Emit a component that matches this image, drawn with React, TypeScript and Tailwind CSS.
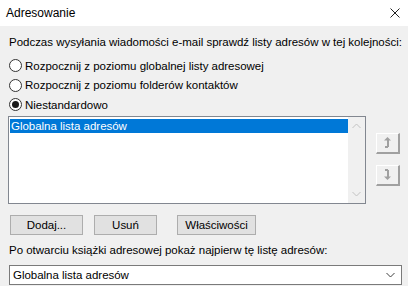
import { useState } from 'react';

function Radio({ checked, label }: { checked?: boolean; label: string }) {
  return (
    <label className="flex items-center h-[19.5px] gap-[3px]">
      <span className="w-[13px] h-[13px] rounded-full border border-[#333333] bg-white flex items-center justify-center">
        {checked && <span className="w-[7px] h-[7px] rounded-full bg-[#1a1a1a]" />}
      </span>
      <span>{label}</span>
    </label>
  );
}

function Chevron({ up, color }: { up?: boolean; color: string }) {
  return (
    <svg width="9" height="6" viewBox="0 0 9 6" className="block">
      <path d={up ? 'M0.5 5 L4.5 1 L8.5 5' : 'M0.5 1 L4.5 5 L8.5 1'} fill="none" stroke={color} strokeWidth="1" />
    </svg>
  );
}

function MoveButton({ up }: { up?: boolean }) {
  return (
    <button className="w-[24px] h-[21px] bg-[#f0f0f0] border-t border-l border-white border-r-2 border-b-2 border-r-[#a0a0a0] border-b-[#a0a0a0] flex items-center justify-center">
      <svg width="7" height="11" viewBox="0 0 7 11" className="block">
        {up ? (
          <g fill="#a0a0a0">
            <path d="M3.5 0 L7 3.5 L0 3.5 Z" />
            <rect x="3" y="3" width="2" height="7" />
            <rect x="1" y="9" width="3" height="2" />
          </g>
        ) : (
          <g fill="#a0a0a0">
            <path d="M3.5 11 L7 7.5 L0 7.5 Z" />
            <rect x="3" y="1" width="2" height="7" />
            <rect x="1" y="0" width="3" height="2" />
          </g>
        )}
      </svg>
    </button>
  );
}

export default function App() {
  const [sel] = useState(0);
  return (
    <div className="w-[408px] h-[286px] bg-[#f0f0f0] text-[11.5px] tracking-[-0.02px] leading-[16px] text-black font-['Liberation_Sans',sans-serif] whitespace-nowrap overflow-hidden">
      <div className="h-[26px] bg-white flex items-center justify-between pl-[6px] pr-[8px]">
        <span className="text-[12px] tracking-normal">Adresowanie</span>
        <svg width="10" height="10" viewBox="0 0 10 10" className="block">
          <path d="M0.5 0.5 L9.5 9.5 M9.5 0.5 L0.5 9.5" stroke="#222" strokeWidth="1" />
        </svg>
      </div>

      <div className="px-[8px]">
        <p className="mt-[8px] pl-[1px]">Podczas wysyłania wiadomości e-mail sprawdź listy adresów w tej kolejności:</p>

        <div className="mt-[6px] pl-[1px]">
          <Radio label="Rozpocznij z poziomu globalnej listy adresowej" />
          <Radio label="Rozpocznij z poziomu folderów kontaktów" />
          <Radio checked label="Niestandardowo" />
        </div>

        <div className="flex mt-[1px]">
          <div className="w-[360px] h-[88px] border border-[#828790] bg-white flex">
            <div className="flex-1 pt-[2px] pl-[1px]">
              <div className={sel === 0 ? 'h-[14px] bg-[#0078d7] text-white pl-[1px] leading-[14px]' : 'h-[14px] pl-[1px]'}>
                Globalna lista adresów
              </div>
            </div>
            <div className="w-[17px] bg-[#f0f0f0] flex flex-col justify-between items-center py-[6px]">
              <Chevron up color="#c2c2c2" />
              <Chevron color="#c2c2c2" />
            </div>
          </div>
          <div className="ml-[10px] flex flex-col pt-[17px] gap-[11px]">
            <MoveButton up />
            <MoveButton />
          </div>
        </div>

        <div className="flex mt-[11px] pl-[2px]">
          <button className="w-[73px] h-[20px] bg-[#e1e1e1] border border-[#adadad]">Dodaj...</button>
          <button className="ml-[11px] w-[63px] h-[20px] bg-[#e1e1e1] border border-[#adadad]">Usuń</button>
          <button className="ml-[20px] w-[79px] h-[20px] bg-[#e1e1e1] border border-[#adadad]">Właściwości</button>
        </div>

        <p className="mt-[7px] pl-[1px]">Po otwarciu książki adresowej pokaż najpierw tę listę adresów:</p>

        <div className="mt-[7px] ml-[1px] w-[393px] h-[20px] bg-white border border-[#7a7a7a] flex items-center justify-between pl-[3px] pr-[6px]">
          <span>Globalna lista adresów</span>
          <Chevron color="#404040" />
        </div>
      </div>
    </div>
  );
}
